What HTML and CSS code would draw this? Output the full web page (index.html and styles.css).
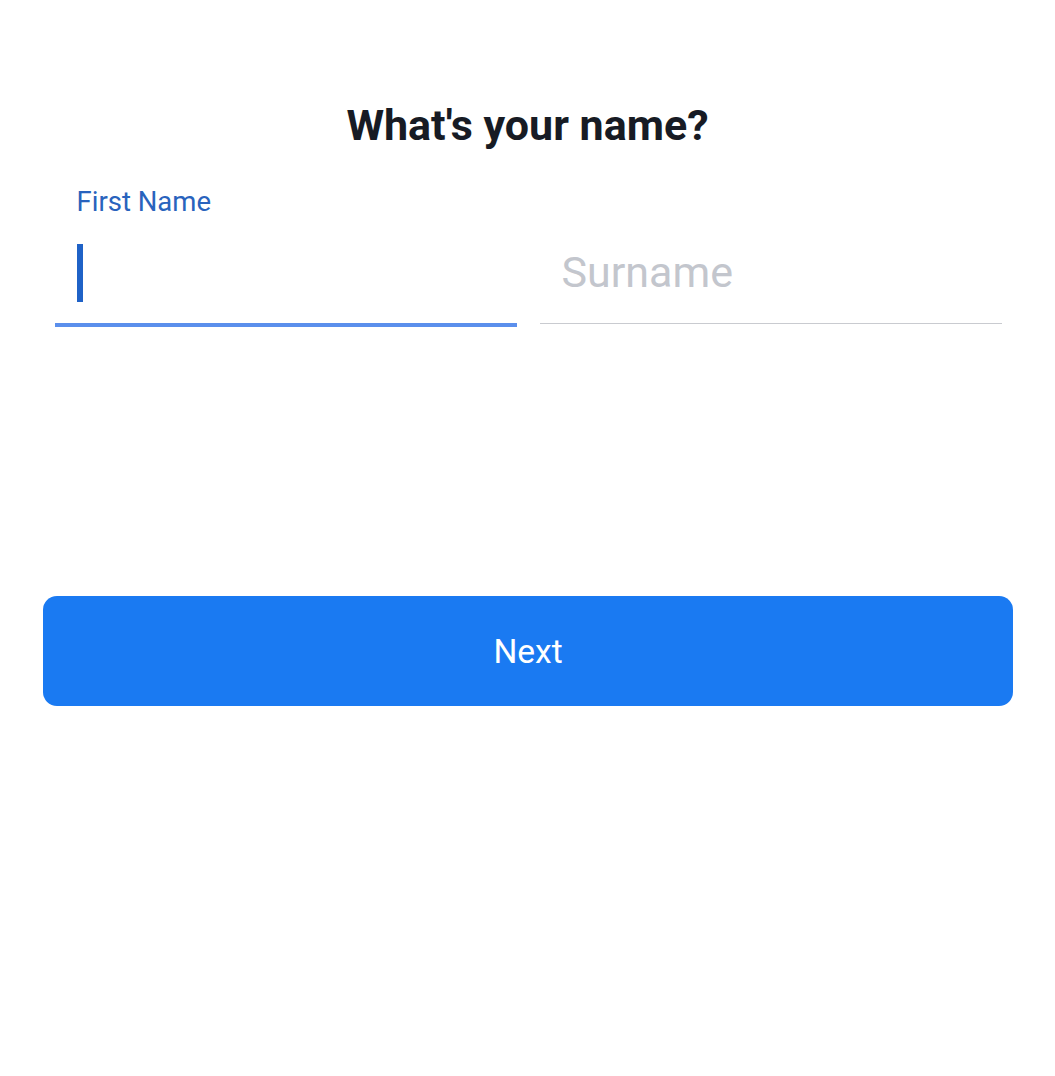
FILE: index.html
```html
<!DOCTYPE html>
<html lang="en">
<head>
<meta charset="utf-8">
<title>What's your name?</title>
<link rel="stylesheet" href="styles.css">
</head>
<body>
<main class="page">
  <h1 class="title">What's your name?</h1>
  <div class="fields">
    <div class="field field--active">
      <label class="field-label">First Name</label>
      <div class="field-input"><span class="caret"></span></div>
    </div>
    <div class="field">
      <div class="field-label field-label--empty">&nbsp;</div>
      <div class="field-input"><span class="placeholder">Surname</span></div>
    </div>
  </div>
  <button class="next-btn" type="button">Next</button>
</main>
</body>
</html>
```
FILE: styles.css
```css
html, body {
  margin: 0;
  padding: 0;
  background: #ffffff;
}
body {
  font-family: Roboto, "Liberation Sans", Arial, sans-serif;
  width: 1055px;
  height: 1076px;
  overflow: hidden;
}
.page {
  display: flex;
  flex-direction: column;
  align-items: center;
  padding-top: 95px;
}
.title {
  margin: 0;
  font-size: 43px;
  font-weight: 700;
  line-height: 60px;
  color: #171b24;
  letter-spacing: 0;
}
.fields {
  display: flex;
  gap: 23px;
  width: 947px;
  margin-top: 29px;
  margin-left: 1px;
}
.field {
  flex: 1;
  display: flex;
  flex-direction: column;
}
.field-label {
  font-size: 27.5px;
  line-height: 36px;
  color: #2963bd;
  padding-left: 22px;
}
.field-input {
  height: 104px;
  display: flex;
  align-items: center;
  padding-left: 22px;
  border-bottom: 1px solid #c9cbd0;
  box-sizing: border-box;
}
.field--active .field-input {
  border-bottom: 4px solid #5b8fec;
  height: 107px;
}
.caret {
  display: block;
  width: 6px;
  height: 58px;
  background: #1f62c7;
  margin-top: 2px;
}
.placeholder {
  font-size: 43px;
  color: #c3c6cd;
}
.next-btn {
  margin-top: 269px;
  width: 970px;
  height: 110px;
  border: none;
  border-radius: 14px;
  background: #1a7af2;
  color: #ffffff;
  font-family: Roboto, "Liberation Sans", Arial, sans-serif;
  font-size: 33.5px;
  font-weight: 400;
  margin-left: 1px;
}
```
